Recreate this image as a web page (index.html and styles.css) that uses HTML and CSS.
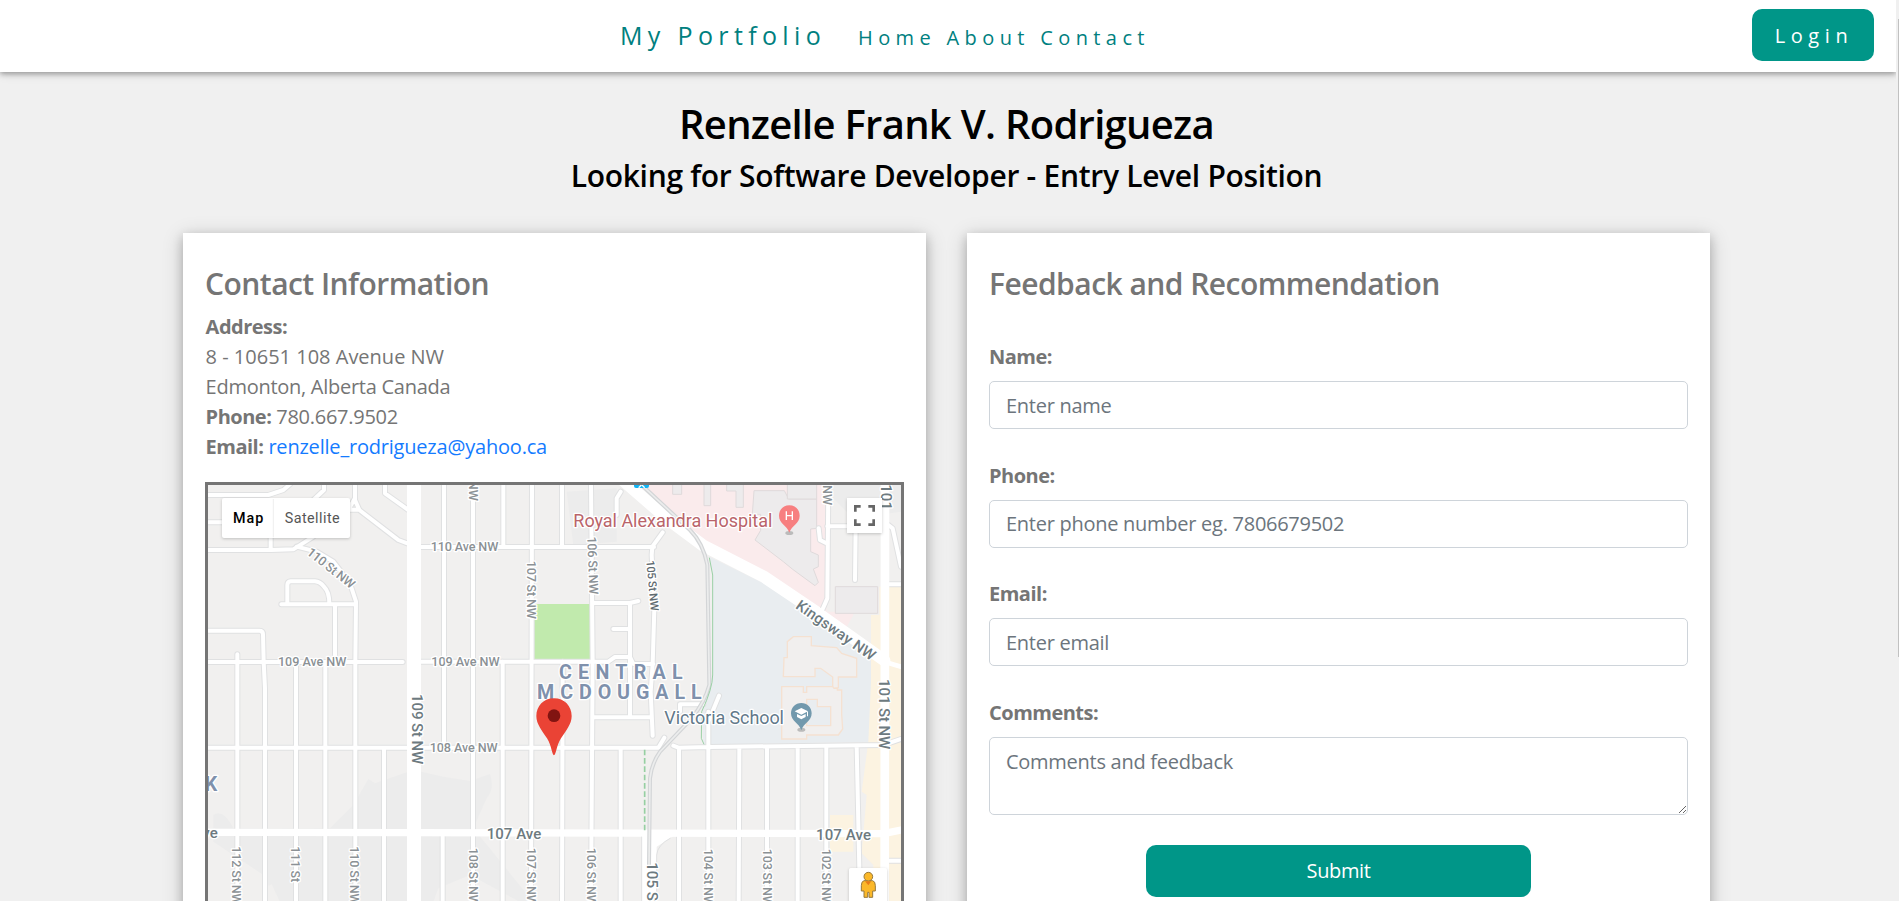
FILE: index.html
```html
<!DOCTYPE html>
<html lang="en">
<head>
<meta charset="utf-8">
<title>My Portfolio</title>
<link rel="stylesheet" href="styles.css">
</head>
<body>
<div class="page">
  <header class="navbar">
    <nav class="nav-main">
      <a class="brand" href="#">My Portfolio</a>
      <div class="nav-links"><a href="#">Home</a> <a href="#">About</a> <a href="#">Contact</a></div>
    </nav>
    <button class="btn btn-login">Login</button>
  </header>

  <section class="intro">
    <h1>Renzelle Frank V. Rodrigueza</h1>
    <h2>Looking for Software Developer - Entry Level Position</h2>
  </section>

  <main class="cards">
    <section class="card">
      <h3 class="card-title">Contact Information</h3>
      <p class="contact">
        <b>Address:</b><br>
        <span class="street">8 - 10651 108 Avenue NW</span><br>
        Edmonton, Alberta Canada<br>
        <b>Phone:</b> 780.667.9502<br>
        <b>Email:</b> <a class="mail" href="#">renzelle_rodrigueza@yahoo.ca</a>
      </p>
      <div class="map">
        <svg class="map-canvas" viewBox="24 30 2079 1251" xmlns="http://www.w3.org/2000/svg">
          <defs>
            <g id="minor">
              <path d="M24 60H205L250 45L270 28M24 142H80M212 180V225M24 225H212L280 223L340 185M465 30V75L478 105L595 195L630 208M465 70L445 104H478M372 30V45L340 75M555 30V55L625 105"/>
              <path d="M290 215L350 230L400 260L450 325L468 380L466 561V1281M244 388H468M262 388V330Q262 320 272 319H345Q360 320 372 335Q388 350 388 386M405 388V561"/>
              <path d="M24 467H178Q189 467 189 478L191 561L195 640V1281M24 561H608M112 538V1281M288 570V1281M376 570V1281M552 820V1281M24 818H1375L1393 788"/>
              <path d="M732 30V818M728 1080V1281M819 30V1281M910 30V215M908 560V1281M996 30L993 1281M1086 30V215M1088 560L1086 1281M1173 30L1178 560L1173 1281"/>
              <path d="M663 216H1362M663 560H1225L1245 546H1290L1300 567H1360M1262 50L1250 70V120M1388 172L1357 215L1355 240L1363 400L1358 567L1352 650L1358 782M1262 820V1281M1290 386V725M1180 384H1290L1315 378M1240 462H1290M1180 727H1352"/>
              <path d="M1420 812L1435 818L1525 816L2050 810L2103 792M1437 818V1281M1525 710V1281M1525 740L1557 662M1440 710V688H1510M1618 820L1616 1281M1701 820V1281M1793 818V1281M1879 816V1281M1970 816L1978 1180"/>
              <path d="M1885 30L1882 370L1868 402M1882 154H1960M1967 154L1965 315M1856 160L1860 195L1878 204M2065 150L2078 160L2103 275M2060 328H2103M2060 1157H2103"/>
            </g>
            <g id="major">
              <path stroke-width="22" d="M24 1072L642 1073L2050 1076L2103 1065"/>
              <path stroke-width="26" d="M2055 30L2054 1281"/>
              <path stroke-width="42" d="M642 20V1290"/>
              <path stroke-width="36" d="M1262 10L1400 130L1510 212L1690 304L1850 412L2053 556"/>
              <path stroke-width="14" d="M2053 560L2103 575"/>
            </g>
          </defs>
          <rect x="24" y="30" width="2079" height="1251" fill="#f1f0ef"/>
          <path fill="#ececec" d="M390 1060L460 990L505 912L525 925L640 885L730 905L810 918L870 897Q885 940 860 970L820 1060L1000 1281H230L190 1200L40 1100V1020Q70 1000 100 1060ZM1100 50L1250 40V200L1120 210ZM1860 30H2103V110L1960 130Z"/>
          <path fill="#f1f0ef" d="M700 1281L715 1240L810 1200L960 1281ZM120 1281L215 1228L240 1281Z"/>
          <path fill="#faebec" d="M1325 30H1880V410H1960V420L1935 465L1850 400L1690 292L1510 200Z"/>
          <g fill="#edebec" stroke="#dfdadb" stroke-width="3">
            <path d="M1418 30V58H1445V30M1512 30V92H1532V30M1580 30V48H1608V97H1630V30"/>
            <path d="M1662 47H1753L1766 72H1850V160L1832 162V230L1855 240V275L1840 282L1855 322L1845 332L1778 283L1750 260L1665 195L1682 166V118H1657Z"/>
            <path d="M1762 30V72H1850V30M1906 335H2033V415H1906Z"/>
          </g>
          <path fill="#e9edf0" d="M1528 245L1690 325L1850 430L2035 560L2015 640V800L1510 810L1505 700L1538 600V300Z"/>
          <g fill="#f1efee" stroke="#f5e1d1" stroke-width="4">
            <path d="M1780 485H1834V512L1910 518L1925 535L1970 550V606H1915V638L1898 640V606L1862 580H1845V605H1802H1750L1752 548H1762V500Z"/>
            <path fill-rule="evenodd" d="M1745 635H1810V652H1820V635H1898L1902 640H1912V645H1925V718L1928 762L1915 780H1820V792H1745ZM1805 695V740H1820V752H1892V695H1852V673H1820V695Z"/>
          </g>
          <path fill="#fcf3e1" d="M2070 335H2103V1281H2020V1170L1985 1135L2000 960L1985 950L2005 800L2013 620V420H2038V335ZM1890 1020H1960V1130H1890Z"/>
          <path fill="#c1eaad" d="M1003 387H1170V552H1003Z"/>
          <use href="#minor" class="casing"/>
          <use href="#major" class="road-main"/>
          <use href="#minor" class="road"/>
          <path fill="#fff" d="M1325 1080H1425L1370 1115V1281H1325Z"/>
          <path class="casing-thin" d="M1325 1085V1281M1412 1089Q1372 1110 1370 1140V1281"/>
          <path class="rail" d="M1325 30L1470 165Q1510 205 1522 270L1528 630Q1515 680 1475 730L1380 830Q1355 865 1350 910L1347 1170"/>
          <path class="rail rail-inner" d="M1325 30L1470 165Q1510 205 1522 270L1528 630Q1515 680 1475 730L1380 830Q1355 865 1350 910L1347 1170"/>
          <path class="green-line" d="M1528 248L1538 300V600Q1538 640 1505 710L1504 790L1512 808"/>
          <path class="green-dash" d="M1334 824V1066"/>
          <rect x="1302" y="10" width="45" height="29" rx="6" fill="#12b5f5"/>
          <path d="M1316 38L1324 30M1334 38L1326 30" stroke="#fff" stroke-width="4"/>

          <g class="st">
            <text x="692" y="228" textLength="203">110 Ave NW</text>
            <text x="234" y="573" textLength="205">109 Ave NW</text>
            <text x="694" y="573" textLength="205">109 Ave NW</text>
            <text x="689" y="831" textLength="204">108 Ave NW</text>
            <text transform="translate(318 236) rotate(38.5)" textLength="171">110 St NW</text>
            <text transform="translate(982 257) rotate(90)" textLength="175">107 St NW</text>
            <text transform="translate(806 17) rotate(90)">NW</text>
            <text transform="translate(1868 30) rotate(90)">NW</text>
            <text transform="translate(1162 185) rotate(88)" textLength="174">106 St NW</text>
            <text class="dark" transform="translate(1339 257) rotate(85)" textLength="152">105 St NW</text>
            <text transform="translate(97 1114) rotate(90)" textLength="175">112 St NW</text>
            <text transform="translate(273 1114) rotate(90)" textLength="108">111 St</text>
            <text transform="translate(451 1114) rotate(90)" textLength="175">110 St NW</text>
            <text transform="translate(806 1118) rotate(90)" textLength="175">108 St NW</text>
            <text transform="translate(981 1118) rotate(90)" textLength="175">107 St NW</text>
            <text transform="translate(1161 1118) rotate(90)" textLength="175">106 St NW</text>
            <text transform="translate(1513 1121) rotate(90)" textLength="175">104 St NW</text>
            <text transform="translate(1688 1121) rotate(90)" textLength="175">103 St NW</text>
            <text transform="translate(1865 1121) rotate(90)" textLength="175">102 St NW</text>
          </g>
          <g class="av">
            <text x="860" y="1092" textLength="164">107 Ave</text>
            <text x="1848" y="1095" textLength="165">107 Ave</text>
            <text x="7" y="1090">ve</text>
            <text transform="translate(635 657) rotate(90)" textLength="211">109 St NW</text>
            <text transform="translate(2038 612) rotate(90)" textLength="211">101 St NW</text>
            <text transform="translate(2044 28) rotate(90)">101</text>
            <text transform="translate(1341 1162) rotate(90)">105 St NW</text>
            <text transform="translate(1784 398) rotate(35)" textLength="280">Kingsway NW</text>
          </g>
          <g class="area">
            <text x="1077" y="612" textLength="371">CENTRAL</text>
            <text x="1011" y="672" textLength="494">MCDOUGALL</text>
            <text x="14" y="948">K</text>
          </g>
          <text class="poi hospital" x="1120" y="156" textLength="597">Royal Alexandra Hospital</text>
          <text class="poi school" x="1393" y="747" textLength="359">Victoria School</text>

          <ellipse cx="1768" cy="174" rx="12" ry="6" fill="#bbb"/>
          <path fill="#f77f80" d="M1768 91C1750 91 1737 104 1737 122C1737 147 1761 150 1768 173C1775 150 1799 147 1799 122C1799 104 1786 91 1768 91Z"/>
          <path d="M1759 109V135M1777 109V135M1759 122H1777" stroke="#fff" stroke-width="4"/>
          <ellipse cx="1804" cy="764" rx="12" ry="6" fill="#bbb"/>
          <path fill="#7299ad" d="M1804 684C1786 684 1773 697 1773 715C1773 740 1797 743 1804 766C1811 743 1835 740 1835 715C1835 697 1822 684 1804 684Z"/>
          <path fill="#fff" d="M1804 699L1824 709L1804 719L1784 709ZM1791 717L1804 723L1817 717V726L1804 733L1791 726ZM1821 710H1824V724H1821Z"/>
          <path fill="#ea4335" d="M1062 670C1031 670 1009 693 1009 723C1009 748 1026 766 1041 790C1055 812 1056 841 1062 841C1068 841 1069 812 1083 790C1098 766 1115 748 1115 723C1115 693 1093 670 1062 670Z"/>
          <circle cx="1062" cy="722" r="19" fill="#811411"/>

          <g class="ctl">
            <rect x="66" y="69" width="384" height="120" rx="6"/>
            <rect x="1941" y="69" width="105" height="105"/>
            <rect x="1947" y="1179" width="114" height="114" rx="5"/>
          </g>
          <path d="M220 72V187" stroke="#eee" stroke-width="3"/>
          <text class="ctl-text on" x="99" y="145" textLength="91">Map</text>
          <text class="ctl-text" x="254" y="145" textLength="165">Satellite</text>
          <path fill="none" stroke="#666" stroke-width="8" d="M1966 110V94H1982M2005 94H2021V110M2021 133V149H2005M1982 149H1966V133"/>
          <g fill="#fbb829" stroke="#96793e" stroke-width="3">
            <path d="M1992 1217H2018Q2026 1219 2026 1232V1248H2018V1267H2007V1252H2003V1267H1992V1248H1984V1232Q1984 1219 1992 1217Z"/>
            <circle cx="2005" cy="1205" r="13"/>
          </g>
          <path fill="#e97b18" d="M1995 1219H2014L2005 1231Z"/>
        </svg>
      </div>
    </section>

    <section class="card">
      <h3 class="card-title">Feedback and Recommendation</h3>
      <form class="form">
        <div class="field"><label for="name">Name:</label><input id="name" type="text" placeholder="Enter name"></div>
        <div class="field"><label for="phone">Phone:</label><input id="phone" type="text" placeholder="Enter phone number eg. 7806679502"></div>
        <div class="field"><label for="email">Email:</label><input id="email" type="text" placeholder="Enter email"></div>
        <div class="field"><label for="comments">Comments:</label><textarea id="comments" placeholder="Comments and feedback"></textarea></div>
        <button class="btn btn-submit" type="button">Submit</button>
      </form>
    </section>
  </main>
</div>
<div class="scroll-thumb"></div>
</body>
</html>
```
FILE: styles.css
```css
* { box-sizing: border-box; }

body {
  margin: 0;
  height: 901px;
  overflow: hidden;
  background: #f0f0f0;
  color: #757575;
  font-family: "Open Sans", "Noto Sans", sans-serif;
  font-size: 20px;
  letter-spacing: -.27px;
  line-height: 30px;
}

h1, h2, h3, p { margin: 0; }
a { text-decoration: none; }
b, label { letter-spacing: -.5px; }

.page { width: 1896px; height: 901px; overflow: hidden; }

.navbar {
  display: flex;
  align-items: center;
  height: 72px;
  padding: 0 22px 2px 0;
  background: #fff;
  box-shadow: 0 2px 5px rgba(0, 0, 0, .3), 0 2px 10px rgba(0, 0, 0, .12);
}

.nav-main {
  display: flex;
  align-items: baseline;
  flex: 1;
  padding: 2px 0 0 620px;
}

.nav-main a { color: #008080; }

.brand {
  width: 238px;
  font-size: 25px;
  letter-spacing: 5.35px;
  white-space: nowrap;
}

.nav-links { letter-spacing: 5.4px; word-spacing: -.2px; white-space: nowrap; }

.btn {
  height: 52px;
  border: 0;
  border-radius: 10px;
  background: #009688;
  color: #fff;
  font: inherit;
}

.btn-login { width: 122px; padding: 1px 0 0 2px; letter-spacing: 5.6px; }

.intro {
  padding: 27px 3px 0 0;
  height: 161px;
  color: #000;
  text-align: center;
}

.intro h1 { font-size: 40px; font-weight: 600; line-height: 50px; letter-spacing: -.71px; }
.intro h2 { font-size: 30px; font-weight: 600; line-height: 36px; padding-top: 9px; letter-spacing: -.3px; }

.cards {
  display: grid;
  grid-template-columns: 743px 743px;
  column-gap: 41px;
  padding-left: 183px;
}

.card {
  height: 760px;
  padding: 33px 22px 0;
  background: #fff;
  box-shadow: 0 4px 10px rgba(0, 0, 0, .2), 0 4px 20px rgba(0, 0, 0, .19);
}

.card-title {
  height: 45px;
  font-size: 30px;
  font-weight: 600;
  line-height: 35px;
  letter-spacing: -.53px;
}

.contact { height: 171px; padding: 1px 0 0 .6px; white-space: nowrap; }
.street { letter-spacing: 0; }
.mail { color: #147bff; letter-spacing: -.2px; }

.map {
  width: 699px;
  height: 500px;
  border: 3px solid #757575;
  overflow: hidden;
}

.map-canvas { display: block; width: 693px; height: 417px; font-family: Roboto, sans-serif; letter-spacing: 0; }

.casing, .road, .road-main { fill: none; stroke: #fff; stroke-linejoin: round; stroke-linecap: round; }
.casing { stroke: #e0e1e2; stroke-width: 18px; }
.road { stroke-width: 12px; }
.casing-thin { fill: none; stroke: #e0e1e2; stroke-width: 3px; }
.rail { fill: none; stroke: #d3d5d7; stroke-width: 12px; }
.rail-inner { stroke: #eceded; stroke-width: 5px; }
.green-line { fill: none; stroke: #9bd0a5; stroke-width: 3px; }
.green-dash { fill: none; stroke: #96cfa2; stroke-width: 5px; stroke-dasharray: 17px 8px; }

.map-canvas text { paint-order: stroke; stroke: #fff; stroke-width: 8px; stroke-linejoin: round; }
.st { font-size: 38px; font-weight: 500; fill: #8b9195; }
.map-canvas .dark { font-size: 34px; fill: #5f6a70; }
.av { font-size: 45px; font-weight: 500; fill: #6d7a80; }
.area { font-size: 59px; font-weight: 700; fill: #7f91ac; }
.poi { font-size: 54px; }
.hospital { fill: #b9646a; }
.school { fill: #62798a; }
.ctl { fill: #fff; filter: drop-shadow(0 3px 4px rgba(0, 0, 0, .2)); }
.map-canvas .ctl-text { font-size: 43px; fill: #565656; stroke: none; }
.map-canvas .on { font-weight: 500; fill: #000; }

.form { display: flex; flex-direction: column; padding-top: 32px; }
.field { display: flex; flex-direction: column; min-height: 88.6px; margin-bottom: 30px; }
.field:last-of-type { margin-bottom: 29.8px; }
label { height: 38px; font-weight: 700; line-height: 27.4px; }

input, textarea {
  display: block;
  width: 699px;
  height: 48px;
  margin: 0;
  padding: 8px 16px;
  border: 1px solid #ced4da;
  border-radius: 5px;
  background: #fff;
  font: inherit;
  letter-spacing: -.27px;
  line-height: 30px;
}

textarea { height: 78px; padding-top: 9px; resize: vertical; }
::placeholder { color: #6c757d; opacity: 1; }

.btn-submit { width: 385px; align-self: center; padding: 1px 0 0; letter-spacing: -.4px; }

.scroll-thumb {
  position: absolute;
  top: 19px;
  right: 0;
  width: 1px;
  height: 638px;
  background: #c1c1c1;
}
```
